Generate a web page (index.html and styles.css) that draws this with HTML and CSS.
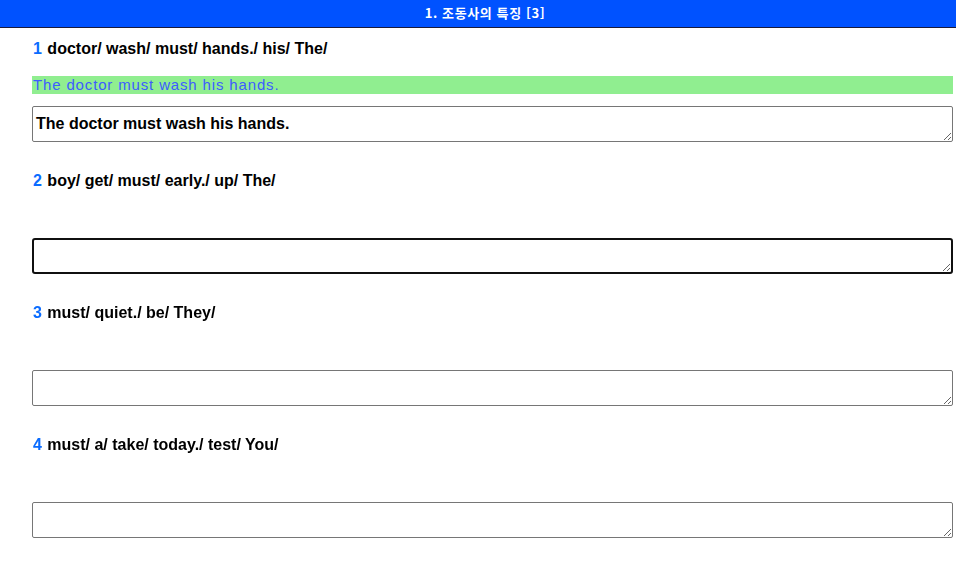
FILE: index.html
```html
<!DOCTYPE html>
<html lang="ko">
<head>
<meta charset="utf-8">
<title>조동사의 특징</title>
<link rel="stylesheet" href="styles.css">
</head>
<body>
<header class="topbar">1. 조동사의 특징 [3]</header>
<main class="content">
  <section class="item">
    <div class="question"><span class="num">1</span> doctor/ wash/ must/ hands./ his/ The/</div>
    <div class="answer">The doctor must wash his hands.</div>
    <textarea class="reply">The doctor must wash his hands.</textarea>
  </section>
  <section class="item">
    <div class="question"><span class="num">2</span> boy/ get/ must/ early./ up/ The/</div>
    <div class="answer hidden"></div>
    <textarea class="reply active" autofocus></textarea>
  </section>
  <section class="item">
    <div class="question"><span class="num">3</span> must/ quiet./ be/ They/</div>
    <div class="answer hidden"></div>
    <textarea class="reply"></textarea>
  </section>
  <section class="item">
    <div class="question"><span class="num">4</span> must/ a/ take/ today./ test/ You/</div>
    <div class="answer hidden"></div>
    <textarea class="reply"></textarea>
  </section>
</main>
</body>
</html>
```
FILE: styles.css
```css
html, body {
  margin: 0;
  padding: 0;
  background: #fff;
}
body {
  font-family: "Liberation Sans", Arial, sans-serif;
  color: #000;
}
.topbar {
  height: 27px;
  line-height: 25px;
  background: #0052ff;
  border-bottom: 1px solid #1a1a3a;
  color: #fff;
  text-align: center;
  font-family: "Noto Sans CJK KR", "DejaVu Sans", sans-serif;
  font-size: 13px;
  font-weight: bold;
  letter-spacing: 0.6px;
  padding-left: 14px;
}
.content {
  padding: 10px 3px 0 32px;
  display: flex;
  flex-direction: column;
  gap: 28px;
}
.item {
  display: flex;
  flex-direction: column;
}
.question {
  height: 20px;
  line-height: 22px;
  font-size: 16px;
  font-weight: bold;
  padding-left: 1px;
}
.num {
  color: #0a6cff;
  margin-right: 1px;
}
.answer {
  margin-top: 18px;
  height: 18px;
  line-height: 18px;
  background: #90ee90;
  color: #3d5cff;
  font-family: "Liberation Sans", Arial, sans-serif;
  font-size: 15px;
  letter-spacing: 0.85px;
  padding-left: 1px;
}
.answer.hidden {
  visibility: hidden;
}
.reply {
  margin: 12px 0 0 0;
  box-sizing: border-box;
  width: 100%;
  height: 36px;
  border: 1px solid #767676;
  border-radius: 2px;
  padding: 8px 3px;
  font-family: "Liberation Sans", Arial, sans-serif;
  font-size: 16px;
  font-weight: bold;
  line-height: 18px;
  resize: vertical;
  display: block;
}
.reply.active {
  border: 2px solid #101010;
  border-radius: 3px;
  outline: none;
  padding: 7px 2px;
}
```
